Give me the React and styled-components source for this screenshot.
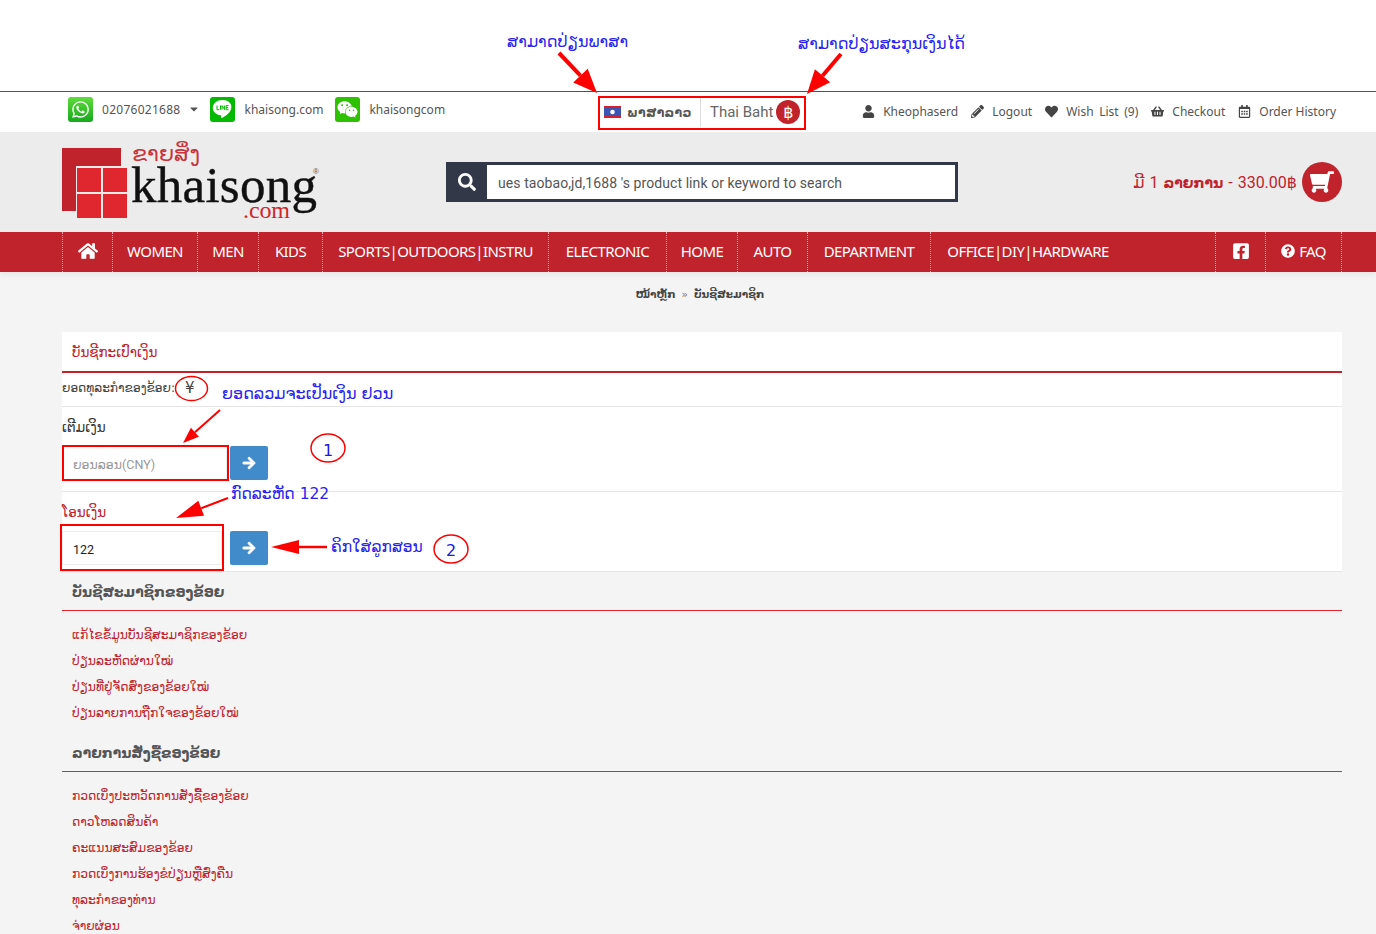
import React from 'react'
import styled, { createGlobalStyle } from 'styled-components'
import {
  FaWhatsapp, FaWeixin, FaHome, FaSearch, FaUser, FaPencilAlt, FaHeart,
  FaShoppingBasket, FaRegCalendarAlt, FaFacebookSquare, FaQuestionCircle,
  FaArrowRight, FaShoppingCart, FaCaretDown,
} from 'react-icons/fa'

const LAO = '"DejaVu Sans", "Noto Sans", sans-serif'
const RED = '#c0232c'

const GlobalStyle = createGlobalStyle`
  html, body { margin: 0; padding: 0; }
  body { background: #f4f4f4; font-family: "Noto Sans", ${LAO}; color: #444; }
  * { box-sizing: border-box; }
`

const Page = styled.div`
  position: relative;
  height: 934px;
  overflow: hidden;
`

const TopSpace = styled.div`
  background: #fff;
  border-bottom: 1px solid ${RED};
  height: 92px;
`

const TopBar = styled.div`
  height: 40px;
  background: #fff;
  display: grid;
  grid-template-columns: 598px 207px 1fr;
  align-items: center;
  font-size: 12px;
  color: #555;
`

const Contacts = styled.div`
  display: flex;
  align-items: center;
  padding-left: 68px;
  margin-top: -6px;
`

const ContactIcon = styled.span`
  width: 25px;
  height: 25px;
  border-radius: 3px;
  background: ${({ $bg }) => $bg};
  color: #fff;
  font-size: ${({ $size }) => $size || 19}px;
  display: flex;
  align-items: center;
  justify-content: center;
  margin-right: ${({ $gap }) => $gap || 9}px;
`

const ContactText = styled.span`
  margin-right: ${({ $gap }) => $gap}px;
  display: flex;
  align-items: center;
  white-space: nowrap;
  letter-spacing: ${({ $track }) => $track || 0}px;
`

const Caret = styled(FaCaretDown)`
  margin-left: 8px;
  font-size: 12px;
`

const Switcher = styled.div`
  display: flex;
  height: 34px;
  padding: 2px;
`

const LangPart = styled.div`
  width: 101px;
  display: flex;
  align-items: center;
  padding-left: 4px;
  border-right: 1px solid #ddd;
  font: bold 12.5px ${LAO};
  color: #555;
  letter-spacing: .3px;
`

const Flag = styled.svg`
  width: 17px;
  height: 12px;
  margin-right: 6px;
`

const CurrencyPart = styled.div`
  flex: 1;
  display: flex;
  align-items: center;
  padding-left: 9px;
  font: 15px Roboto, sans-serif;
  color: #666;
  white-space: nowrap;
`

const BahtBadge = styled.span`
  width: 24px;
  height: 24px;
  border-radius: 50%;
  background: ${RED};
  color: #fff;
  font: 16px ${LAO};
  display: flex;
  align-items: center;
  justify-content: center;
  margin-left: 3px;
`

const UserLinks = styled.div`
  display: flex;
  justify-content: flex-end;
  align-items: center;
  padding-right: 40px;
  margin-top: -1px;
`

const UserLink = styled.span`
  display: flex;
  align-items: center;
  margin-left: 13px;
  white-space: nowrap;
  word-spacing: ${({ $words }) => $words || 0}px;
  svg {
    font-size: 13px;
    color: #444;
    margin-right: 8px;
  }
`

const Header = styled.div`
  height: 100px;
  background: #ececec;
  display: flex;
  align-items: center;
  padding: 0 34px 0 62px;
  position: relative;
`

const LogoSvg = styled.svg`
  width: 270px;
  height: 100px;
  flex: none;
`

const SearchBox = styled.div`
  width: 512px;
  height: 40px;
  margin-left: 114px;
  display: flex;
  border: 3px solid #333848;
  background: #fff;
`

const SearchButton = styled.div`
  width: 38px;
  background: #333848;
  color: #fff;
  font-size: 18px;
  padding-right: 3px;
  display: flex;
  align-items: center;
  justify-content: center;
`

const SearchText = styled.div`
  padding-left: 11px;
  font: 14px/36px Roboto, sans-serif;
  letter-spacing: .08px;
  color: #555;
`

const CartArea = styled.div`
  margin-left: auto;
  display: flex;
  align-items: center;
  color: ${RED};
`

const CartText = styled.span`
  font: 16px Roboto, ${LAO};
  word-spacing: 1px;
  margin-right: 5px;
  white-space: nowrap;
  b { font: bold 14px ${LAO}; }
`

const CartCircle = styled.span`
  width: 40px;
  height: 40px;
  border-radius: 50%;
  background: ${RED};
  color: #fff;
  font-size: 24px;
  display: flex;
  align-items: center;
  justify-content: center;
  svg { transform: scaleX(-1); }
`

const Nav = styled.nav`
  height: 40px;
  background: ${RED};
  padding: 0 34px 0 62px;
  display: flex;
  box-shadow: 0 3px 6px rgba(0, 0, 0, .05);
  position: relative;
`

const NavItem = styled.div`
  width: ${({ $w }) => $w}px;
  border-left: 1px dotted #e9a9ad;
  ${({ $last }) => $last && 'border-right: 1px dotted #e9a9ad;'}
  ${({ $push }) => $push && 'margin-right: auto;'}
  color: #fff;
  font: 15px "Noto Sans", sans-serif;
  letter-spacing: -.6px;
  padding-bottom: 2px;
  display: flex;
  align-items: center;
  justify-content: center;
  white-space: nowrap;
  svg { font-size: ${({ $icon }) => $icon || 14}px; }
`

const FaqIcon = styled(FaQuestionCircle)`
  margin-right: 4px;
`

const Breadcrumb = styled.div`
  height: 60px;
  display: flex;
  justify-content: center;
  align-items: flex-start;
  padding: 16px 0 0 24px;
  font: bold 10.5px ${LAO};
  color: #444;
  span { margin: 0 6px; font-weight: normal; color: #777; }
`

const Content = styled.div`
  margin: 0 34px 0 62px;
`

const Panel = styled.div`
  background: #fff;
`

const PanelTitle = styled.div`
  height: 41px;
  border-bottom: 2px solid ${RED};
  padding-left: 10px;
  font: 13.5px/41px ${LAO};
  color: ${RED};
`

const BalanceRow = styled.div`
  height: 34px;
  border-bottom: 1px solid #e5e5e5;
  font: 12.2px/30px ${LAO};
  color: #444;
  display: flex;
  span { margin-left: 10px; font-size: 15px; }
`

const FormRow = styled.div`
  height: ${({ $h }) => $h}px;
  border-bottom: 1px solid #e5e5e5;
  padding-top: 10px;
`

const FormLabel = styled.div`
  font: 13.5px/20px ${LAO};
  color: ${({ $red }) => ($red ? RED : '#333')};
  margin-bottom: 9px;
`

const FormLine = styled.div`
  display: flex;
  align-items: center;
`

const Field = styled.div`
  width: ${({ $w }) => $w}px;
  height: 34px;
  margin-right: ${({ $gap }) => $gap}px;
  background: #fff;
  border: 1px solid #eee;
  padding-left: 10px;
  font: 12.5px/36px Roboto, ${LAO};
  color: ${({ $muted }) => ($muted ? '#999' : '#222')};
`

const GoButton = styled.div`
  width: 38px;
  height: 34px;
  border-radius: 2px;
  background: #428bca;
  color: #fff;
  font-size: 14px;
  display: flex;
  align-items: center;
  justify-content: center;
  svg { stroke: #fff; stroke-width: 30px; }
`

const SectionTitle = styled.div`
  height: ${({ $h }) => $h}px;
  border-bottom: 1px solid #e0262e;
  padding: ${({ $top }) => $top}px 0 0 10px;
  font: bold 13.900px/20px ${LAO};
  color: #555;
`

const LinkList = styled.div`
  padding: 11px 0 0 10px;
`

const LinkItem = styled.div`
  height: 26px;
  font: 12.300px/26px ${LAO};
  color: ${RED};
`

const Notes = styled.svg`
  position: absolute;
  left: 0;
  top: 0;
  width: 1376px;
  height: 934px;
  pointer-events: none;
`

const Note = styled.div`
  position: absolute;
  left: ${({ $x }) => $x}px;
  top: ${({ $y }) => $y}px;
  font: ${({ $size }) => $size || 16}px/20px ${LAO};
  color: ${({ $color }) => $color || '#2a1ff0'};
  white-space: nowrap;
`

// arrow = a thick line with a triangle on the end
const Arrow = ({ x1, y1, x2, y2, w = 4, head = 24, wing = 10 }) => {
  const len = Math.hypot(x2 - x1, y2 - y1)
  const ux = (x2 - x1) / len
  const uy = (y2 - y1) / len
  const bx = x2 - ux * head
  const by = y2 - uy * head
  const points = `${x2},${y2} ${bx - uy * wing},${by + ux * wing} ${bx + uy * wing},${by - ux * wing}`
  return (
    <g>
      <line x1={x1} y1={y1} x2={bx} y2={by} stroke="#f00" strokeWidth={w} />
      <polygon points={points} fill="#f00" />
    </g>
  )
}

const accountLinks = [
  'ແກ້ໄຂຂໍ້ມູນບັນຊີສະມາຊິກຂອງຂ້ອຍ',
  'ປ່ຽນລະຫັດຜ່ານໃໝ່',
  'ປ່ຽນທີ່ຢູ່ຈັດສົ່ງຂອງຂ້ອຍໃໝ່',
  'ປ່ຽນລາຍການຖືກໃຈຂອງຂ້ອຍໃໝ່',
]

const orderLinks = [
  'ກວດເບິ່ງປະຫວັດການສັ່ງຊື້ຂອງຂ້ອຍ',
  'ດາວໂຫລດສິນຄ້າ',
  'ຄະແນນສະສົມຂອງຂ້ອຍ',
  'ກວດເບິ່ງການຮ້ອງຂໍປ່ຽນຫຼືສົ່ງຄືນ',
  'ທຸລະກຳຂອງທ່ານ',
  'ຈ່າຍຜ່ອນ',
]

const navItems = [
  ['WOMEN', 85], ['MEN', 61], ['KIDS', 64], ['SPORTS|OUTDOORS|INSTRU', 226],
  ['ELECTRONIC', 118], ['HOME', 71], ['AUTO', 70], ['DEPARTMENT', 123],
]

const LineIcon = () => (
  <svg width="21" height="20" viewBox="0 0 21 20">
    <path d="M10.5 1C5 1 .8 4.500.8 8.700c0 3.800 3.300 7 7.800 7.600.9.200.6 1 .4 2.200 0 .5.300.8 1 .4 1.500-.8 9.300-5.300 9.300-10.200C20.200 4.500 16 1 10.500 1z" fill="#fff" />
    <path d="M5 6.500v4.200h2.400M8.500 6.500v4.200M10 10.700V6.500l2.600 4.200V6.500M16.500 6.500h-2.300v4.200h2.300M14.200 8.600h2" fill="none" stroke="#05b800" strokeWidth="1" />
  </svg>
)

const App = () => (
  <Page>
    <GlobalStyle />
    <TopSpace />
    <TopBar>
      <Contacts>
        <ContactIcon $bg="linear-gradient(#5fdc3c,#16a81c)"><FaWhatsapp /></ContactIcon>
        <ContactText $gap={10} $track={0.27}>02076021688<Caret /></ContactText>
        <ContactIcon $bg="#05b800"><LineIcon /></ContactIcon>
        <ContactText $gap={12}>khaisong.com</ContactText>
        <ContactIcon $bg="#2dc100" $size={21}><FaWeixin /></ContactIcon>
        <ContactText>khaisongcom</ContactText>
      </Contacts>
      <Switcher>
        <LangPart>
          <Flag viewBox="0 0 17 12">
            <rect width="17" height="12" fill="#d8202c" />
            <rect y="2" width="17" height="8" fill="#3a55b4" />
            <circle cx="8.500" cy="6" r="2.300" fill="#fff" />
          </Flag>
          ພາສາລາວ
        </LangPart>
        <CurrencyPart>Thai Baht<BahtBadge>฿</BahtBadge></CurrencyPart>
      </Switcher>
      <UserLinks>
        <UserLink><FaUser />Kheophaserd</UserLink>
        <UserLink><FaPencilAlt />Logout</UserLink>
        <UserLink $words={2.500}><FaHeart />Wish List (9)</UserLink>
        <UserLink><FaShoppingBasket />Checkout</UserLink>
        <UserLink><FaRegCalendarAlt />Order History</UserLink>
      </UserLinks>
    </TopBar>

    <Header>
      <LogoSvg viewBox="0 0 270 100">
        <rect x="0" y="16" width="59" height="63" fill="#c0232c" />
        <rect x="14" y="34" width="52" height="53" fill="#ececec" />
        <rect x="15" y="36" width="24" height="24" fill="#e0262e" />
        <rect x="41" y="36" width="24" height="24" fill="#e0262e" />
        <rect x="15" y="62" width="24" height="24" fill="#e0262e" />
        <rect x="41" y="62" width="24" height="24" fill="#e0262e" />
        <text x="70" y="29" fontFamily="DejaVu Sans" fontSize="22" fill="#c9323a">ຂາຍສິ່ງ</text>
        <text x="69" y="70" fontFamily="Liberation Serif" fontSize="51" fill="#111" stroke="#111" strokeWidth=".4" textLength="186">khaisong</text>
        <text x="181" y="86" fontFamily="Liberation Serif" fontSize="24" fill="#d0252c" textLength="47">.com</text>
        <text x="251" y="42" fontFamily="Liberation Sans" fontSize="8" fill="#555">®</text>
      </LogoSvg>
      <SearchBox>
        <SearchButton><FaSearch /></SearchButton>
        <SearchText>ues taobao,jd,1688 's product link or keyword to search</SearchText>
      </SearchBox>
      <CartArea>
        <CartText>ມີ 1 <b>ລາຍການ</b> - 330.00฿</CartText>
        <CartCircle><FaShoppingCart /></CartCircle>
      </CartArea>
    </Header>

    <Nav>
      <NavItem $w={50} $icon={20}><FaHome /></NavItem>
      {navItems.map(([label, w]) => <NavItem key={label} $w={w}>{label}</NavItem>)}
      <NavItem $w={195} $push>OFFICE|DIY|HARDWARE</NavItem>
      <NavItem $w={50} $icon={18}><FaFacebookSquare /></NavItem>
      <NavItem $w={77} $last><FaqIcon />FAQ</NavItem>
    </Nav>

    <Breadcrumb>ໜ້າຫຼັກ<span>»</span>ບັນຊີສະມາຊິກ</Breadcrumb>

    <Content>
      <Panel>
        <PanelTitle>ບັນຊີກະເປົາເງິນ</PanelTitle>
        <BalanceRow>ຍອດທຸລະກຳຂອງຂ້ອຍ:<span>¥</span></BalanceRow>
        <FormRow $h={85}>
          <FormLabel>ເຕີມເງິນ</FormLabel>
          <FormLine>
            <Field $w={165} $gap={3} $muted>ຍອນລອນ(CNY)</Field>
            <GoButton><FaArrowRight /></GoButton>
          </FormLine>
        </FormRow>
        <FormRow $h={80}>
          <FormLabel $red>ໂອນເງິນ</FormLabel>
          <FormLine>
            <Field $w={160} $gap={8}>122</Field>
            <GoButton><FaArrowRight /></GoButton>
          </FormLine>
        </FormRow>
      </Panel>

      <SectionTitle $h={39} $top={10}>ບັນຊີສະມາຊິກຂອງຂ້ອຍ</SectionTitle>
      <LinkList>
        {accountLinks.map((text) => <LinkItem key={text}>{text}</LinkItem>)}
      </LinkList>
      <SectionTitle $h={46} $top={17}>ລາຍການສັ່ງຊື້ຂອງຂ້ອຍ</SectionTitle>
      <LinkList>
        {orderLinks.map((text) => <LinkItem key={text}>{text}</LinkItem>)}
      </LinkList>
    </Content>

    <Notes viewBox="0 0 1376 934">
      <Arrow x1={559} y1={53} x2={597} y2={93} />
      <Arrow x1={841} y1={54} x2={807} y2={94} />
      <Arrow x1={220} y1={410} x2={183} y2={443} w={2} head={16} wing={6} />
      <Arrow x1={228} y1={498} x2={176} y2={518} w={2} head={27} wing={8} />
      <Arrow x1={327} y1={547} x2={271} y2={547} w={2.500} head={28} wing={7} />
      <rect x="599" y="97" width="206" height="32" fill="none" stroke="#f00" strokeWidth="2" />
      <rect x="63" y="446" width="165" height="34" fill="none" stroke="#f00" strokeWidth="2" />
      <rect x="61" y="525" width="162" height="45" fill="none" stroke="#f00" strokeWidth="2" />
      <ellipse cx="191.500" cy="388.500" rx="16" ry="12" fill="none" stroke="#f00" strokeWidth="1.500" />
      <ellipse cx="328" cy="448" rx="17" ry="14" fill="none" stroke="#f00" strokeWidth="1.500" />
      <ellipse cx="451" cy="549" rx="17" ry="14" fill="none" stroke="#f00" strokeWidth="1.500" />
    </Notes>
    <Note $x={507} $y={32}>ສາມາດປ່ຽນພາສາ</Note>
    <Note $x={798} $y={34}>ສາມາດປ່ຽນສະກຸນເງິນໄດ້</Note>
    <Note $x={222} $y={384}>ຍອດລວມຈະເປັນເງິນ ຢວນ</Note>
    <Note $x={231} $y={484} $size={15.500}>ກົດລະຫັດ 122</Note>
    <Note $x={331} $y={537} $size={15.500}>ຄິກໃສ່ລູກສອນ</Note>
    <Note $x={323} $y={441} $color="#1a1ae0">1</Note>
    <Note $x={446} $y={541} $color="#1a1ae0">2</Note>
  </Page>
)

export default App
